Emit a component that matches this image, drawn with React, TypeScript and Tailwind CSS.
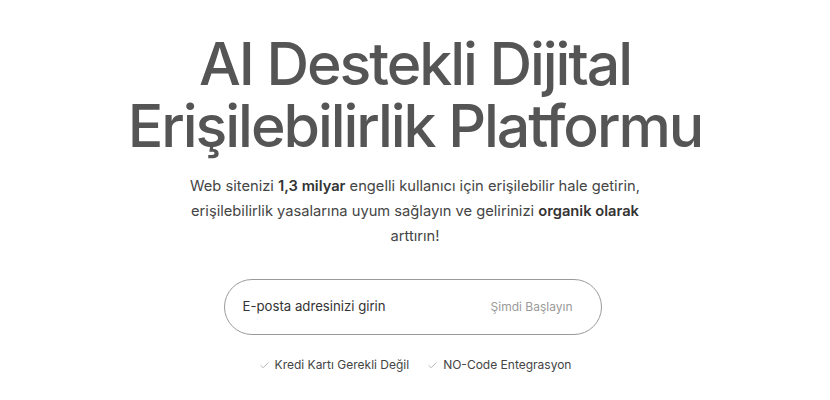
import { Check } from "lucide-react";

export default function App() {
  return (
    <div
      className="w-[830px] h-[400px] bg-white flex flex-col items-center overflow-hidden"
      style={{ fontFamily: "Inter, 'Noto Sans', sans-serif" }}
    >
      <h1 className="mt-[33px] text-center text-[59px] leading-[62px] font-medium tracking-[-0.035em] text-[#555555]">
        AI Destekli Dijital
        <br />
        Erişilebilirlik Platformu
      </h1>
      <p className="mt-[17px] w-[480px] text-center text-[14.7px] leading-[25px] text-[#454545]">
        Web sitenizi <strong className="font-semibold text-[#333]">1,3 milyar</strong> engelli kullanıcı için erişilebilir hale getirin, erişilebilirlik yasalarına uyum sağlayın ve gelirinizi{" "}
        <strong className="font-semibold text-[#333]">organik olarak</strong> arttırın!
      </p>
      <div className="mt-[30px] mr-[5px] w-[378px] h-[56px] rounded-full border border-[#9a9a9a] flex items-center justify-between pl-[18px] pr-[28px]">
        <span className="text-[13.2px] text-[#333]">E-posta adresinizi girin</span>
        <button className="text-[12px] text-[#9a9a9a]">Şimdi Başlayın</button>
      </div>
      <div className="mt-[21px] flex items-center gap-[18px] text-[12px] text-[#444]">
        <div className="flex items-center gap-[5px]">
          <Check size={11} strokeWidth={1.5} className="text-[#999]" />
          <span>Kredi Kartı Gerekli Değil</span>
        </div>
        <div className="flex items-center gap-[5px]">
          <Check size={11} strokeWidth={1.5} className="text-[#999]" />
          <span>NO-Code Entegrasyon</span>
        </div>
      </div>
    </div>
  );
}
